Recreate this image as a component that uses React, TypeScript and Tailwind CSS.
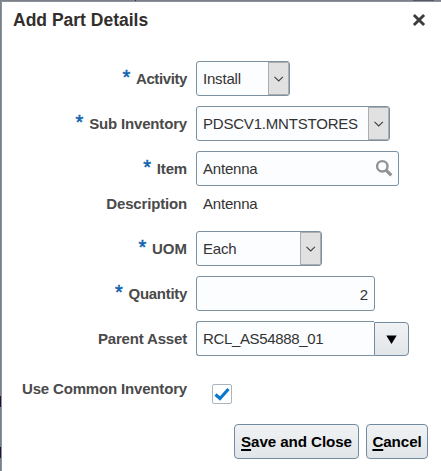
import type { ReactNode } from "react";

const boxClass = "h-[35px] rounded-[3px] border border-[#7b919f] bg-[#fcfdff]";

function Row({
    label,
    labelClass = "tracking-[-0.17px]",
    required,
    children,
}: {
    label: string;
    labelClass?: string;
    required?: boolean;
    children: ReactNode;
}) {
    return (
        <div className="flex h-[35px] items-center">
            <div className="flex w-[185px] shrink-0 items-center justify-end font-bold text-[#4a4a4a]">
                {required && (
                    <span className="relative -top-[2px] mr-[6px] text-[20px] leading-[20px] font-normal text-[#0f62ae] [-webkit-text-stroke:0.5px]">
                        *
                    </span>
                )}
                <span className={`whitespace-nowrap ${labelClass}`}>{label}</span>
            </div>
            <div className="ml-[9px] flex">{children}</div>
        </div>
    );
}

function SelectBox({ value, className }: { value: string; className: string }) {
    return (
        <button
            type="button"
            className={`${boxClass} ${className} flex items-center justify-between pl-[6px]`}
        >
            <span className="whitespace-nowrap">{value}</span>
            <span className="flex h-[33px] w-[21px] shrink-0 items-center justify-center border border-[#adadad] bg-[#e1e1e1]">
                <svg width="10" height="6" viewBox="0 0 10 6" fill="none">
                    <path d="M0.5 0.8L4.7 5L8.9 0.8" stroke="#404040" strokeWidth="1.1" />
                </svg>
            </span>
        </button>
    );
}

function ActionButton({ label, className }: { label: string; className: string }) {
    return (
        <button
            type="button"
            className={`${className} h-[35px] rounded-[4px] border border-[#738ba1] bg-linear-to-b from-[#f0f2f4] to-[#e2e5e8] text-[15.2px] font-bold tracking-[-0.1px] whitespace-nowrap text-black`}
        >
            <span className="underline decoration-2 underline-offset-2 [text-decoration-skip-ink:none]">
                {label.charAt(0)}
            </span>
            {label.slice(1)}
        </button>
    );
}

export default function App() {
    return (
        <div className="relative h-[471px] w-[441px] overflow-hidden bg-[#807f82] pt-px pl-px font-['Liberation_Sans',Arial,sans-serif] text-[15px] leading-[18px] text-[#333333]">
            {/* bits of the page behind the dialog */}
            <span className="absolute top-0 left-[135px] h-px w-px bg-[#33283c]" />
            <span className="absolute top-0 left-[413px] h-px w-[21px] bg-[#5c5660]" />
            <span className="absolute top-[396px] left-0 h-[11px] w-px bg-[#2a1030]" />
            <span className="absolute top-[447px] left-0 h-[11px] w-px bg-[#2a1030]" />

            <div className="flex h-[470px] flex-col border-t border-l border-[#8494a5] bg-white">
                <header className="flex h-[59px] shrink-0 items-start justify-between pt-[8px] pr-[15px] pl-[11px]">
                    <h1 className="text-[17.5px] leading-[20px] font-bold text-[#332e2c]">
                        Add Part Details
                    </h1>
                    <button type="button" aria-label="Close" className="mt-[3px]">
                        <svg width="14" height="14" viewBox="0 0 14 14" fill="none">
                            <path
                                d="M1.9 2L12.1 12M12.1 2L1.9 12"
                                stroke="#3c3c3f"
                                strokeWidth="2.9"
                            />
                        </svg>
                    </button>
                </header>

                <main className="flex flex-col gap-[10px] tracking-[-0.2px]">
                    <Row label="Activity" labelClass="tracking-[-0.4px]" required>
                        <SelectBox value="Install" className="w-[94px]" />
                    </Row>
                    <Row label="Sub Inventory" required>
                        <SelectBox value="PDSCV1.MNTSTORES" className="w-[194px]" />
                    </Row>
                    <Row label="Item" required>
                        <div className={`${boxClass} flex w-[203px] items-center justify-between pr-[5px] pl-[6px]`}>
                            <span>Antenna</span>
                            <svg
                                className="mb-[2px]"
                                width="18"
                                height="18"
                                viewBox="0 0 18 18"
                                fill="none"
                                stroke="#929292"
                            >
                                <circle cx="7.3" cy="7.3" r="5.2" strokeWidth="2.4" />
                                <path d="M11.3 11.3L16.3 16.3" strokeWidth="3.3" />
                            </svg>
                        </div>
                    </Row>
                    <div className="-mt-[10px]">
                        <Row label="Description">
                            <span className="pl-[7px]">Antenna</span>
                        </Row>
                    </div>
                    <Row label="UOM" labelClass="tracking-normal" required>
                        <SelectBox value="Each" className="w-[126px]" />
                    </Row>
                    <Row label="Quantity" labelClass="tracking-[-0.3px]" required>
                        <div className={`${boxClass} flex w-[179px] items-center justify-end pt-[3px] pr-[6px]`}>
                            2
                        </div>
                    </Row>
                    <Row label="Parent Asset">
                        <div className="flex h-[35px] items-end">
                            <div className="flex h-[35px] w-[178px] items-center rounded-l-[3px] border border-r-0 border-[#7b919f] bg-[#fcfdff] pl-[6px] tracking-[-0.35px]">
                                RCL_AS54888_01
                            </div>
                            <button
                                type="button"
                                aria-label="Choose parent asset"
                                className="flex h-[34px] w-[35px] items-center justify-center rounded-r-[4px] border border-[#738ba1] bg-linear-to-b from-[#f0f2f4] to-[#e2e5e8]"
                            >
                                <svg width="11" height="9" viewBox="0 0 11 9">
                                    <path d="M0.3 0.5H10.7L5.5 9Z" fill="#000" />
                                </svg>
                            </button>
                        </div>
                    </Row>
                </main>

                <div className="mt-[15px] flex h-[35px] items-start">
                    <span className="mt-[9px] w-[185px] text-right font-bold tracking-[-0.17px] whitespace-nowrap text-[#4a4a4a]">
                        Use Common Inventory
                    </span>
                    <span
                        role="checkbox"
                        aria-checked="true"
                        aria-label="Use Common Inventory"
                        className="mt-[13px] ml-[25px] flex size-[20px] items-center justify-center rounded-[2px] border border-[#aab5bf] bg-white"
                    >
                        <svg width="16" height="14" viewBox="0 0 16 14" fill="none">
                            <path d="M1.5 7.5L6 11.5L14.5 2" stroke="#0b78d0" strokeWidth="3.1" />
                        </svg>
                    </span>
                </div>

                <footer className="mt-[18px] flex justify-end gap-[7px] pr-[13px]">
                    <ActionButton label="Save and Close" className="w-[125px]" />
                    <ActionButton label="Cancel" className="w-[62px]" />
                </footer>
            </div>
        </div>
    );
}
